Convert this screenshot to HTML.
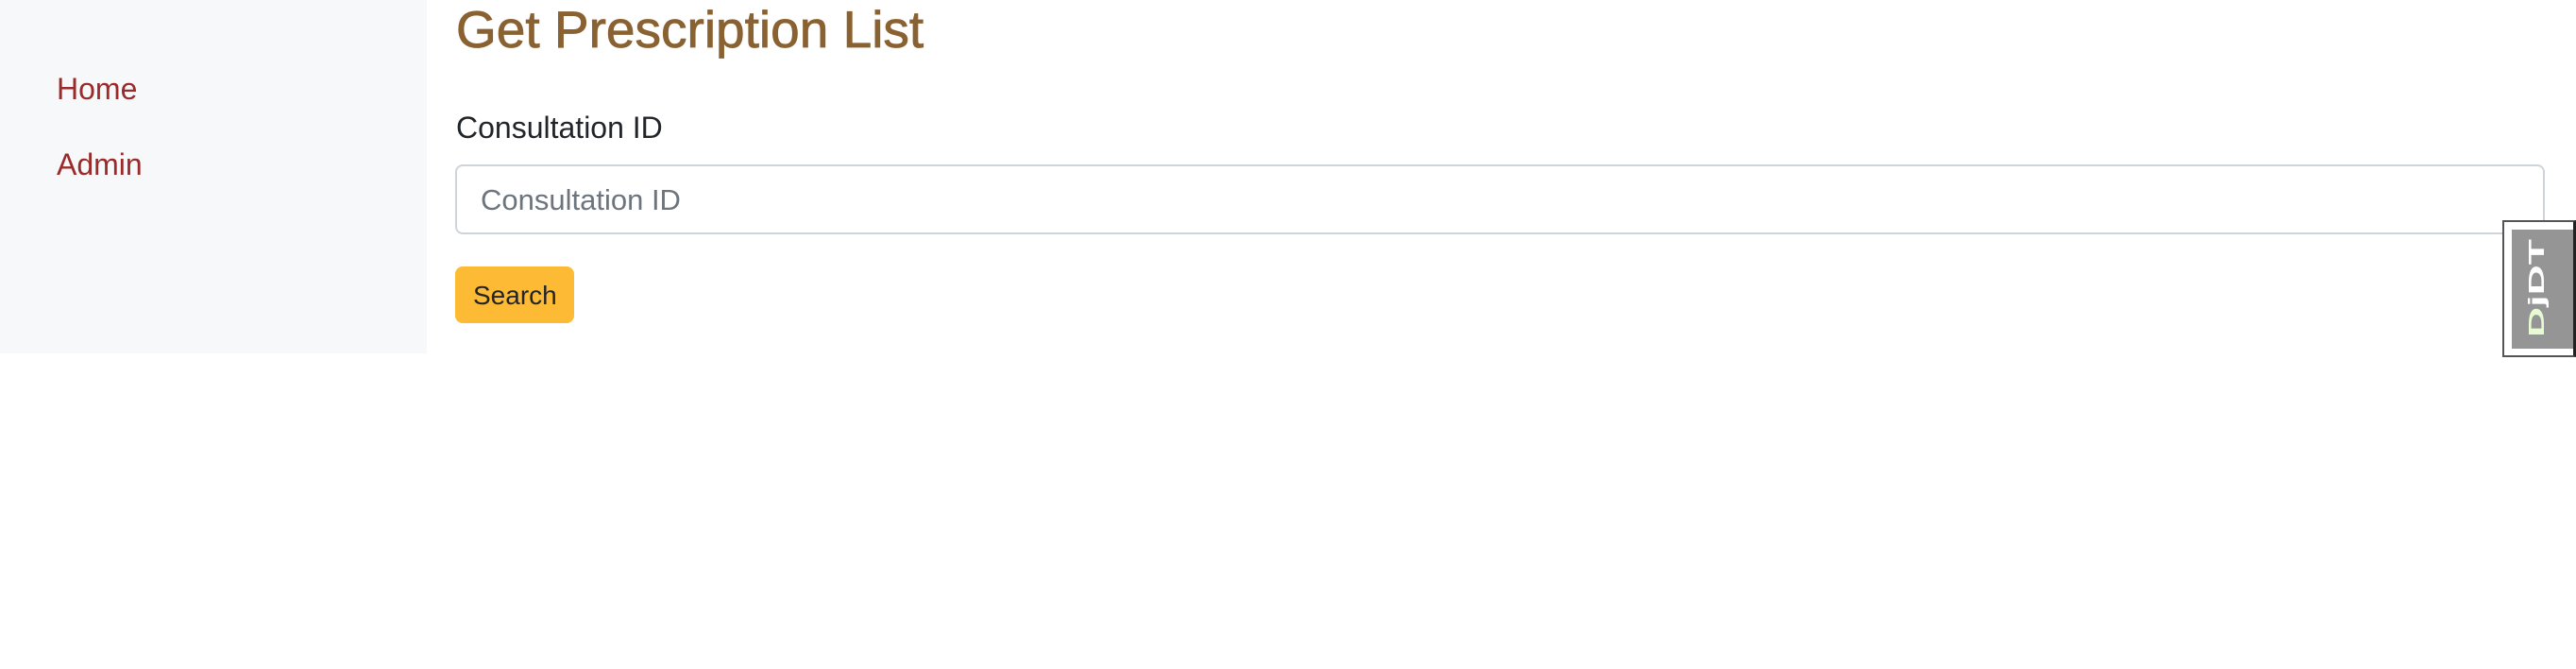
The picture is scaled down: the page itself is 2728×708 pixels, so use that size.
<!DOCTYPE html>
<html><head><meta charset="utf-8"><style>
html,body{margin:0;padding:0;background:#fff;width:2728px;height:708px;overflow:hidden;position:relative;font-family:"Liberation Sans",Arial,sans-serif}
.a{position:absolute;white-space:nowrap;line-height:1}
</style></head><body>
<div class="a" style="left:0;top:0;width:452px;height:374px;background:#f7f8fa"></div>
<div class="a" style="left:60px;top:78px;font-size:32px;color:#9b2a2a">Home</div>
<div class="a" style="left:60px;top:158px;font-size:32px;color:#9b2a2a">Admin</div>
<div class="a" style="left:483px;top:4px;font-size:55px;color:#8a6130;-webkit-text-stroke:0.8px #8a6130">Get Prescription List</div>
<div class="a" style="left:483px;top:119px;font-size:32px;color:#212529">Consultation ID</div>
<div class="a" style="left:482px;top:174px;width:2209px;height:70px;border:2px solid #ced4da;border-radius:8px;background:#fff"></div>
<div class="a" style="left:509px;top:196px;font-size:31px;color:#6c757d">Consultation ID</div>
<div class="a" style="left:482px;top:282px;width:126px;height:60px;background:#fdbb35;border-radius:8px"></div>
<div class="a" style="left:501px;top:299px;font-size:28px;color:#212529">Search</div>
<div class="a" style="left:2650px;top:233px;width:78px;height:145px;box-sizing:border-box;border:2px solid #555;border-right:3px solid #222;background:#fff"></div>
<div class="a" style="left:2660px;top:243px;width:65px;height:126px;background:#959595"></div>
<svg class="a" style="left:2660px;top:243px" width="65" height="126">
<text transform="translate(34,114) rotate(-90)" font-family="Liberation Sans" font-weight="bold" font-size="23" textLength="104" lengthAdjust="spacingAndGlyphs" fill="#fff"><tspan fill="#e6fbd2">D</tspan>jDT</text>
</svg>
</body></html>
